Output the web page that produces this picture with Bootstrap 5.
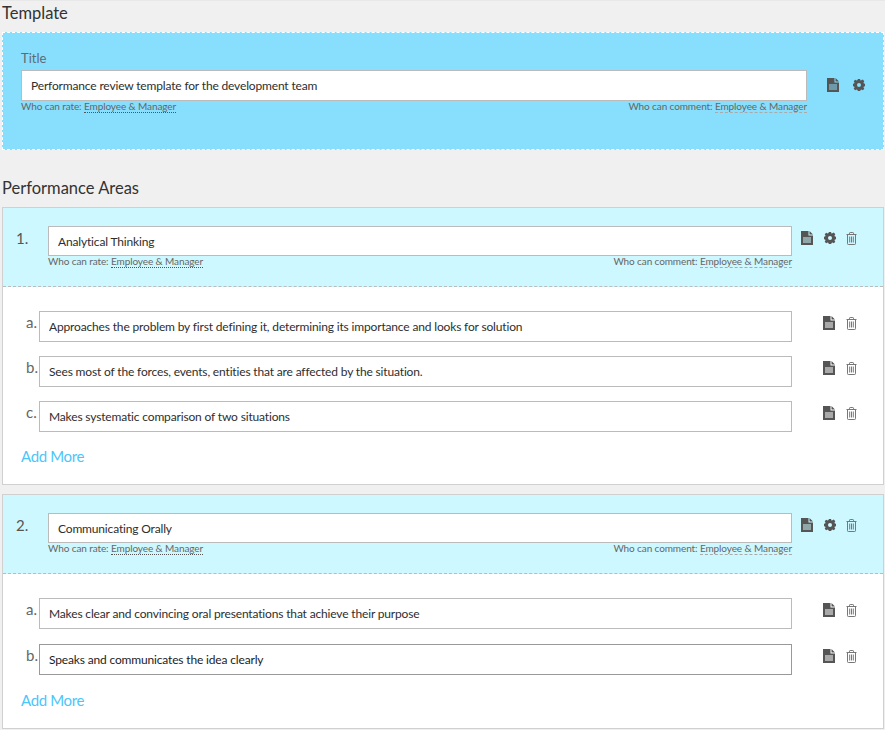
<!DOCTYPE html>
<html lang="en"><head><meta charset="utf-8"><title>Template</title>
<link href="https://cdn.jsdelivr.net/npm/bootstrap@5.3.0/dist/css/bootstrap.min.css" rel="stylesheet">
<style>
html,body{height:730px;overflow:hidden}
body{background:#f0f0f0;font-family:Lato,"Open Sans",sans-serif;color:#333;font-size:13px;padding:0 1px 0 2px;border-top:1px solid #e8e8e8}
.sec-title{font-size:16.5px;font-weight:400;line-height:20px;margin:0;color:#333}
.t1{padding-top:2px;height:31px}
.t2{height:20px;margin-top:28px;margin-bottom:9px;padding-top:0}
.hero{background:#87dffd;border:1px dashed #fff;height:118px;padding:17px 0 0 18px}
.hero-main{flex:0 0 786px;min-width:0}
.hero-label{font-size:13px;line-height:16px;color:#5f6b73;margin-bottom:4px}
.txt{display:block;width:100%;height:31px;padding:0 9px;border:1px solid #bbb;border-radius:0;background:#fff;font-size:12px;letter-spacing:-.16px;color:#2e2e2e;font-family:inherit;line-height:29px;outline:0}
.txt.dark{border-color:#999;color:#1c1c1c}
.meta{font-size:10px;letter-spacing:-.1px;line-height:12px;margin-top:-1px;color:#666;white-space:nowrap}
.meta .dd{border-bottom:1px dotted #555}
.meta .dd2{border-bottom:1px dashed #aaa}
.ico{display:block;flex:none}
.ico-row{display:flex;align-items:center}
.area{background:#fff;border:1px solid #d0d0d0;margin-bottom:9px}
.area-head{background:#cef8ff;border-bottom:1px dashed #bbb;height:79px;padding:18px 0 0 13px;display:flex}
.num{width:32px;flex:none;font-size:15px;line-height:24px;color:#555}
.head-fld{width:744px;flex:none}
.head-fld .txt{height:30px}
.head-ico{margin-left:9px;gap:10.5px;height:24px}
.area-body{padding-top:24px}
.item{display:flex;height:31px;margin-bottom:14px;padding-left:23px}
.tight .item{margin-bottom:15px}
.let{width:13px;flex:none;font-size:15px;line-height:22px;color:#666;white-space:nowrap}
.item .txt{width:753px;flex:none}
.item-ico{margin-left:31px;padding-top:2px;gap:11px;height:22px;align-self:flex-start}
.add{display:block;font-size:15px;letter-spacing:-.35px;line-height:20px;color:#4cc5fb;text-decoration:none;padding-left:18px;margin-top:2px}
.hero-ico{margin-left:20px;gap:14px;height:30px;align-self:flex-start;margin-top:20px}
.tail{height:18px}
</style></head>
<body>
<svg width="0" height="0" class="position-absolute"><defs>
<symbol id="doc" viewBox="0 0 12 14"><path fill="#555" fill-rule="evenodd" d="M0 0h7.500v4.500H12V14H0zM2 6.600v1h8v-1zM2 8.600v1h8v-1zM2 10.600v1h8v-1zM8.500 0L12 3.500H8.500z"/></symbol>
<symbol id="gear" viewBox="0 0 12 12"><path fill="#555" fill-rule="evenodd" d="M4.900 0h2.200l.3 1.600 1-.4L9.800.6l1.500 1.600-.8 1.300.4 1 1.600.4v2.200l-1.600.4-.4 1 .8 1.300-1.500 1.500-1.300-.8-1 .4-.4 1.600H4.900l-.4-1.600-1-.4-1.300.8L.7 9.800l.8-1.300-.4-1-1.600-.4V4.900l1.600-.4.400-1-.8-1.300L2.200.7l1.300.8 1-.4zM6 4a2 2 0 1 0 0 4 2 2 0 0 0 0-4z"/></symbol>
<symbol id="bin" viewBox="0 0 11 13"><path fill="none" stroke="#777" d="M.5 2.500h10M3.500 2.500V1.200q0-.7.700-.7h2.600q.7 0 .7.700v1.300M1.500 2.500v9.200q0 .8.800.8h6.400q.8 0 .8-.8V2.500M3.700 4.500v6M5.500 4.500v6M7.300 4.500v6"/></symbol>
</defs></svg>

<h5 class="sec-title t1">Template</h5>
<div class="hero d-flex">
  <div class="hero-main">
    <div class="hero-label">Title</div>
    <input class="txt" value="Performance review template for the development team">
    <div class="meta d-flex justify-content-between"><span>Who can rate: <span class="dd">Employee &amp; Manager</span></span><span>Who can comment: <span class="dd2">Employee &amp; Manager</span></span></div>
  </div>
  <div class="ico-row hero-ico">
    <svg class="ico" width="12" height="14"><use href="#doc"/></svg>
    <svg class="ico" width="12" height="12"><use href="#gear"/></svg>
  </div>
</div>

<h5 class="sec-title t2">Performance Areas</h5>

<div class="area">
  <div class="area-head">
    <div class="num">1.</div>
    <div class="head-fld">
      <input class="txt" value="Analytical Thinking">
      <div class="meta d-flex justify-content-between"><span>Who can rate: <span class="dd">Employee &amp; Manager</span></span><span>Who can comment: <span class="dd2">Employee &amp; Manager</span></span></div>
    </div>
    <div class="ico-row head-ico">
      <svg class="ico" width="12" height="14"><use href="#doc"/></svg>
      <svg class="ico" width="12" height="12"><use href="#gear"/></svg>
      <svg class="ico" width="11" height="13"><use href="#bin"/></svg>
    </div>
  </div>
  <div class="area-body">
    <div class="item"><div class="let">a.</div><input class="txt" value="Approaches the problem by first defining it, determining its importance and looks for solution"><div class="ico-row item-ico"><svg class="ico" width="12" height="14"><use href="#doc"/></svg><svg class="ico" width="11" height="13"><use href="#bin"/></svg></div></div>
    <div class="item"><div class="let">b.</div><input class="txt" value="Sees most of the forces, events, entities that are affected by the situation."><div class="ico-row item-ico"><svg class="ico" width="12" height="14"><use href="#doc"/></svg><svg class="ico" width="11" height="13"><use href="#bin"/></svg></div></div>
    <div class="item"><div class="let">c.</div><input class="txt" value="Makes systematic comparison of two situations"><div class="ico-row item-ico"><svg class="ico" width="12" height="14"><use href="#doc"/></svg><svg class="ico" width="11" height="13"><use href="#bin"/></svg></div></div>
    <a class="add" href="#">Add More</a>
  </div>
  <div class="tail"></div>
</div>

<div class="area">
  <div class="area-head">
    <div class="num">2.</div>
    <div class="head-fld">
      <input class="txt" value="Communicating Orally">
      <div class="meta d-flex justify-content-between"><span>Who can rate: <span class="dd">Employee &amp; Manager</span></span><span>Who can comment: <span class="dd2">Employee &amp; Manager</span></span></div>
    </div>
    <div class="ico-row head-ico">
      <svg class="ico" width="12" height="14"><use href="#doc"/></svg>
      <svg class="ico" width="12" height="12"><use href="#gear"/></svg>
      <svg class="ico" width="11" height="13"><use href="#bin"/></svg>
    </div>
  </div>
  <div class="area-body tight">
    <div class="item"><div class="let">a.</div><input class="txt" value="Makes clear and convincing oral presentations that achieve their purpose"><div class="ico-row item-ico"><svg class="ico" width="12" height="14"><use href="#doc"/></svg><svg class="ico" width="11" height="13"><use href="#bin"/></svg></div></div>
    <div class="item"><div class="let">b.</div><input class="txt dark" value="Speaks and communicates the idea clearly"><div class="ico-row item-ico"><svg class="ico" width="12" height="14"><use href="#doc"/></svg><svg class="ico" width="11" height="13"><use href="#bin"/></svg></div></div>
    <a class="add" href="#">Add More</a>
  </div>
  <div class="tail"></div>
</div>
</body></html>
